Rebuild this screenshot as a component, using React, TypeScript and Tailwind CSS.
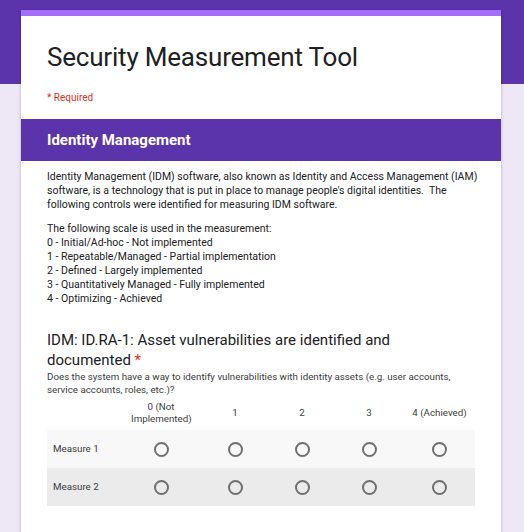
import React from 'react';

const columns = ['0 (Not Implemented)', '1', '2', '3', '4 (Achieved)'];
const rows = ['Measure 1', 'Measure 2'];
const gridCols = 'grid grid-cols-[78px_72px_76px_58px_76px_65px_4px]';

function Radio() {
    return <span className="block w-[15px] h-[15px] rounded-full border-2 border-[#6f6f6f]" />;
}

export default function App() {
    return (
        <div className="relative min-h-[532px] bg-[#ede7f6] font-['Roboto',sans-serif] text-[#202124] overflow-hidden">
            <div className="absolute inset-x-0 top-0 h-[84px] bg-[#5b34ab]" />
            <div className="relative pt-[10px] pl-[21px] w-[501px]">
                <div className="bg-white shadow-[0_1px_3px_rgba(0,0,0,0.25)]">
                    <div className="h-[6px] bg-[#a26ff8]" />
                    <div className="px-[26px] pt-[23px] pb-[14px]">
                        <h1 className="text-[26px] leading-[36px] tracking-[-0.2px]">Security Measurement Tool</h1>
                        <p className="mt-[15px] text-[10px] leading-[15px] text-[#d93025]">* Required</p>
                    </div>
                    <div className="bg-[#5b34ab] h-[42px] flex items-center px-[26px]">
                        <h2 className="text-white font-bold text-[15px]">Identity Management</h2>
                    </div>
                    <div className="px-[26px] pt-[9px] text-[10.5px] leading-[14px] whitespace-nowrap">
                        <p>
                            Identity Management (IDM) software, also known as Identity and Access Management (IAM)<br />
                            software, is a technology that is put in place to manage people's digital identities.&nbsp; The<br />
                            following controls were identified for measuring IDM software.
                        </p>
                        <p className="mt-[10px]">
                            The following scale is used in the measurement:<br />
                            0 - Initial/Ad-hoc - Not implemented<br />
                            1 - Repeatable/Managed - Partial implementation<br />
                            2 - Defined - Largely implemented<br />
                            3 - Quantitatively Managed - Fully implemented<br />
                            4 - Optimizing - Achieved
                        </p>
                    </div>
                    <div className="px-[26px] pt-[24px] pb-[40px]">
                        <h3 className="text-[15px] leading-[20px]">
                            IDM: ID.RA-1: Asset vulnerabilities are identified and<br />
                            documented <span className="text-[#d93025]">*</span>
                        </h3>
                        <p className="text-[9.75px] leading-[13px] text-[#3c3c3c] whitespace-nowrap">
                            Does the system have a way to identify vulnerabilities with identity assets (e.g. user accounts,<br />
                            service accounts, roles, etc.)?
                        </p>
                        <div>
                            <div className={`${gridCols} items-center h-[34px] text-[9.75px] leading-[12px] text-[#3c3c3c] text-center`}>
                                <span />
                                {columns.map((c) => (
                                    <span key={c} className={c.startsWith('0') ? 'px-[6px]' : ''}>{c}</span>
                                ))}
                                <span />
                            </div>
                            {rows.map((r, i) => (
                                <div
                                    key={r}
                                    className={`${gridCols} items-center h-[38px] ${i === 0 ? 'bg-[#f8f8f8]' : 'bg-[#ebebeb]'}`}
                                >
                                    <span className="pl-[6px] text-[9.75px] text-[#3c3c3c]">{r}</span>
                                    {columns.map((c) => (
                                        <span key={c} className="flex justify-center"><Radio /></span>
                                    ))}
                                    <span />
                                </div>
                            ))}
                        </div>
                    </div>
                </div>
            </div>
        </div>
    );
}
